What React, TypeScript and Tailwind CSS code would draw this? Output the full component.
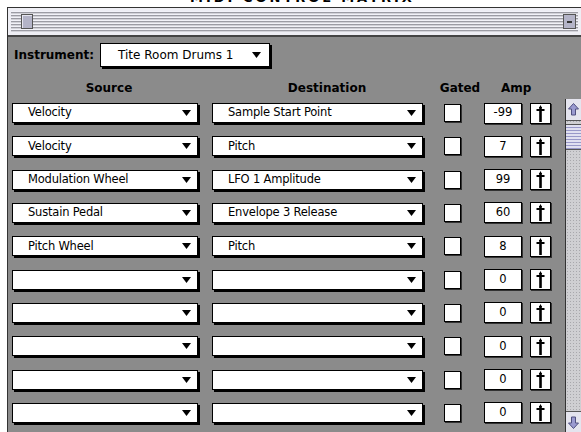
import React from 'react';

const ROWS: { src: string; dst: string; amp: string }[] = [
  { src: 'Velocity', dst: 'Sample Start Point', amp: '-99' },
  { src: 'Velocity', dst: 'Pitch', amp: '7' },
  { src: 'Modulation Wheel', dst: 'LFO 1 Amplitude', amp: '99' },
  { src: 'Sustain Pedal', dst: 'Envelope 3 Release', amp: '60' },
  { src: 'Pitch Wheel', dst: 'Pitch', amp: '8' },
  { src: '', dst: '', amp: '0' },
  { src: '', dst: '', amp: '0' },
  { src: '', dst: '', amp: '0' },
  { src: '', dst: '', amp: '0' },
  { src: '', dst: '', amp: '0' },
];

function Caret() {
  return (
    <svg width="9" height="6" viewBox="0 0 9 6" className="shrink-0">
      <path d="M0 0 H9 L4.5 6 Z" fill="#000" />
    </svg>
  );
}

function Popup({ label, className }: { label: string; className: string }) {
  return (
    <div
      className={`flex h-[20px] items-center justify-between border border-black bg-white pl-[15px] pr-[6px] shadow-[2px_2px_0_#000] ${className}`}
    >
      <span className="text-[11.5px] leading-none tracking-[-0.2px] text-black">{label}</span>
      <Caret />
    </div>
  );
}

function Dagger() {
  return (
    <svg width="9" height="17" viewBox="0 0 9 17">
      <path d="M4.5 0 L6 3 H3 Z" fill="#000" />
      <rect x="3.2" y="2" width="2.6" height="15" fill="#000" />
      <rect x="0.5" y="4" width="8" height="2" fill="#000" />
    </svg>
  );
}

export default function App() {
  return (
    <div
      className="relative h-[432px] w-[581px] overflow-hidden bg-white"
      style={{ fontFamily: '"DejaVu Sans", "Liberation Sans", sans-serif' }}
    >
      {/* window title, mostly hidden above the frame */}
      <div className="h-[7px] overflow-hidden pl-[190px]">
        <div className="-mt-[10px] text-[13px] font-bold leading-[16px] tracking-[3px] text-black">MIDI CONTROL MATRIX</div>
      </div>

      <div className="ml-[7px] flex h-[425px] flex-col border-l border-t border-[#333]">
        {/* title bar */}
        <div className="flex h-[29px] items-center border-b-2 border-[#444] bg-[#eeeef4] px-[3px]">
          <div className="flex h-[21px] flex-1 items-center bg-[repeating-linear-gradient(to_bottom,#f2f2f8_0px,#f2f2f8_1px,#9c9ca4_1px,#9c9ca4_2px,#d2d2d8_2px,#d2d2d8_3px)]">
            <div className="ml-[10px] h-[15px] w-[12px] border border-[#555] bg-[#b4b4c8] shadow-[inset_1px_1px_0_#e6e6f0]" />
            <div className="flex-1" />
            <div className="mr-[2px] flex h-[15px] w-[13px] items-center justify-center border border-[#555] bg-[#b4b4c8]">
              <div className="h-[2px] w-[5px] bg-[#333]" />
            </div>
          </div>
        </div>

        {/* content */}
        <div className="flex flex-1 flex-col bg-[#8b8b8b]">
          <div className="flex items-center pl-[6px] pt-[6px]">
            <span className="text-[12px] font-bold text-black">Instrument:</span>
            <div className="ml-[6px] flex h-[24px] w-[170px] items-center justify-between border border-black bg-white pl-[17px] pr-[8px] shadow-[2px_2px_0_#000]">
              <span className="text-[12px] leading-none text-black">Tite Room Drums 1</span>
              <Caret />
            </div>
          </div>

          <div className="mt-[13px] flex h-[16px] items-center text-[12px] font-bold text-black">
            <div className="w-[202px] text-center">Source</div>
            <div className="w-[234px] text-center">Destination</div>
            <div className="ml-[-9px] w-[50px] text-center">Gated</div>
            <div className="ml-[16px]">Amp</div>
          </div>

          <div className="mt-[3px] flex flex-1">
            <div className="flex flex-1 flex-col gap-[13.33px] pl-[4px] pt-[4px]">
              {ROWS.map((r, i) => (
                <div key={i} className="flex h-[20px] items-center">
                  <Popup label={r.src} className="w-[186px]" />
                  <Popup label={r.dst} className="ml-[14px] w-[211px]" />
                  <div className="ml-[21px] h-[18px] w-[17px] border border-black bg-white shadow-[1px_1px_0_#333]" />
                  <div className="ml-[23px] flex h-[21px] w-[38px] items-center justify-center border border-black bg-white text-[11.5px] text-black shadow-[1px_1px_0_#333]">
                    {r.amp}
                  </div>
                  <div className="ml-[8px] flex h-[21px] w-[21px] items-center justify-center border border-black bg-white shadow-[1px_1px_0_#333]">
                    <Dagger />
                  </div>
                </div>
              ))}
            </div>

            {/* scrollbar */}
            <div className="flex w-[16px] flex-col border-l border-[#333] bg-[#cfcfd2] bg-[radial-gradient(#a8a8ac_0.6px,transparent_0.8px)] bg-[length:3px_3px]">
              <div className="flex h-[22px] items-center justify-center border-b border-[#555] bg-[#e4e4ee]">
                <svg width="11" height="13" viewBox="0 0 11 13">
                  <path d="M5.5 0.5 L10.5 6 H7.5 V12 H3.5 V6 H0.5 Z" fill="#9a9ad0" stroke="#505080" strokeWidth="1" />
                </svg>
              </div>
              <div className="mt-[3px] h-[26px] border-y border-[#555] bg-[repeating-linear-gradient(to_bottom,#e0e0f0_0px,#e0e0f0_2px,#9898c8_2px,#9898c8_3px)]" />
              <div className="flex-1" />
              <div className="flex h-[21px] items-center justify-center border-t border-[#555] bg-[#e4e4ee]">
                <svg width="11" height="13" viewBox="0 0 11 13">
                  <path d="M5.5 12.5 L10.5 7 H7.5 V1 H3.5 V7 H0.5 Z" fill="#9a9ad0" stroke="#505080" strokeWidth="1" />
                </svg>
              </div>
            </div>
          </div>
        </div>
      </div>
    </div>
  );
}
